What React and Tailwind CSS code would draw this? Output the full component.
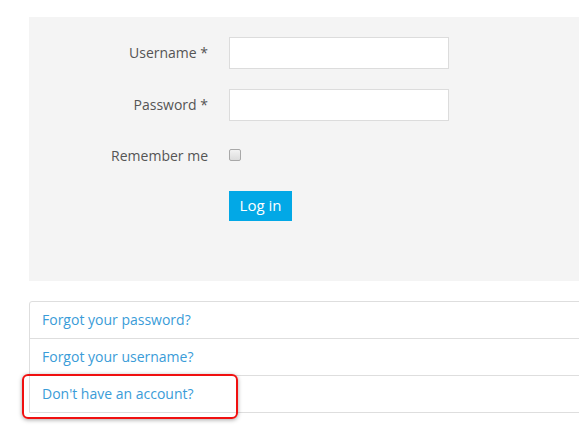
export default function App() {
  const links = ['Forgot your password?', 'Forgot your username?', "Don't have an account?"];

  return (
    <div className="w-[579px] h-[426px] overflow-hidden bg-white pl-[29px] pt-[17px] font-['Open_Sans',sans-serif]">
      {/* Login form */}
      <div className="w-[560px] h-[264px] bg-[#f4f4f4] pt-[20px]">
        <div className="flex items-center h-[32px]">
          <label className="w-[179px] pb-[2px] text-right text-[14px] text-[#555]">Username *</label>
          <input className="ml-[21px] w-[220px] h-[32px] bg-white border border-[#dcdcdc] outline-none" />
        </div>
        <div className="flex items-center h-[32px] mt-[20px]">
          <label className="w-[179px] pb-[2px] text-right text-[14px] text-[#555]">Password *</label>
          <input type="password" className="ml-[21px] w-[220px] h-[32px] bg-white border border-[#dcdcdc] outline-none" />
        </div>
        <div className="flex items-center h-[28px] mt-[20px]">
          <label className="w-[179px] text-right text-[14px] text-[#555]">Remember me</label>
          <div className="ml-[21px] w-[12px] h-[12px] rounded-[2px] border border-[#a8a8a8] bg-gradient-to-b from-[#f2f2f2] to-[#dcdcdc]" />
        </div>
        <div className="flex mt-[22px]">
          <button className="ml-[200px] w-[63px] h-[30px] pb-[1px] bg-[#02a8e6] text-white text-[15px] leading-none">
            Log in
          </button>
        </div>
      </div>

      {/* Links */}
      <div className="relative mt-[20px] w-[560px]">
        <ul className="border border-[#dedede] rounded-tl-[3px]">
          {links.map((l, i) => (
            <li key={l} className={`h-[36px] flex items-center pl-[12px] pb-[2px] ${i > 0 ? 'border-t border-[#dedede] h-[37px]' : ''}`}>
              <a href="#" className="text-[14px] text-[#3a9cd8]">{l}</a>
            </li>
          ))}
        </ul>
        <div className="absolute left-[-7px] top-[73px] w-[216px] h-[45px] border-2 border-[#f01010] rounded-[6px] shadow-[0_1px_4px_rgba(0,0,0,0.35)] pointer-events-none" />
      </div>
    </div>
  );
}
